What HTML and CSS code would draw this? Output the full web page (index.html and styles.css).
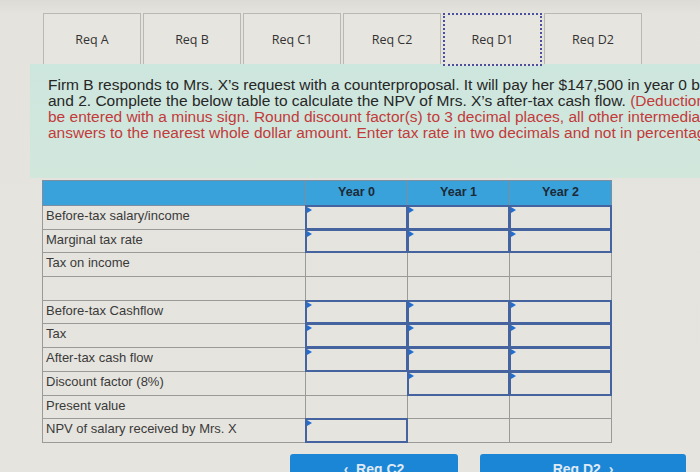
FILE: index.html
```html
<!DOCTYPE html>
<html>
<head>
<meta charset="utf-8">
<link rel="stylesheet" href="styles.css">
</head>
<body>
<div class="page">
  <div class="tabs">
    <div class="tab">Req A</div>
    <div class="tab">Req B</div>
    <div class="tab">Req C1</div>
    <div class="tab">Req C2</div>
    <div class="tab active">Req D1</div>
    <div class="tab">Req D2</div>
  </div>
  <div class="panel">
    <p class="q">Firm B responds to Mrs. X’s request with a counterproposal. It will pay her $147,500 in year 0 b<br>and 2. Complete the below table to calculate the NPV of Mrs. X’s after-tax cash flow. <span class="red">(Deductions</span><br><span class="red">be entered with a minus sign. Round discount factor(s) to 3 decimal places, all other intermediate<br>answers to the nearest whole dollar amount. Enter tax rate in two decimals and not in percentage</span></p>
  </div>
  <table class="grid">
    <thead>
      <tr><th class="lab"></th><th>Year 0</th><th>Year 1</th><th>Year 2</th></tr>
    </thead>
    <tbody>
      <tr><td class="lab">Before-tax salary/income</td><td><div class="in"></div></td><td><div class="in"></div></td><td><div class="in"></div></td></tr>
      <tr><td class="lab">Marginal tax rate</td><td><div class="in"></div></td><td><div class="in"></div></td><td><div class="in"></div></td></tr>
      <tr><td class="lab">Tax on income</td><td></td><td></td><td></td></tr>
      <tr><td class="lab"></td><td></td><td></td><td></td></tr>
      <tr><td class="lab">Before-tax Cashflow</td><td><div class="in"></div></td><td><div class="in"></div></td><td><div class="in"></div></td></tr>
      <tr><td class="lab">Tax</td><td><div class="in"></div></td><td><div class="in"></div></td><td><div class="in"></div></td></tr>
      <tr><td class="lab">After-tax cash flow</td><td><div class="in"></div></td><td><div class="in"></div></td><td><div class="in"></div></td></tr>
      <tr><td class="lab">Discount factor (8%)</td><td></td><td><div class="in"></div></td><td><div class="in"></div></td></tr>
      <tr><td class="lab">Present value</td><td></td><td></td><td></td></tr>
      <tr><td class="lab">NPV of salary received by Mrs. X</td><td><div class="in"></div></td><td></td><td></td></tr>
    </tbody>
  </table>
  <div class="nav">
    <div class="btn prev">‹&nbsp;&nbsp;Req C2</div>
    <div class="btn next">Req D2&nbsp;&nbsp;›</div>
  </div>
</div>
</body>
</html>
```

FILE: styles.css
```css
html, body {
  margin: 0;
  padding: 0;
  overflow: hidden;
  width: 700px;
  height: 472px;
}
body {
  background: linear-gradient(#dcdbd5 0, #e5e3dd 14px, #e6e4de 100%);
  font-family: "Liberation Sans", Arial, sans-serif;
}
.page {
  width: 700px;
  height: 472px;
  overflow: hidden;
}
.tabs {
  display: flex;
  gap: 2px;
  margin: 13px 0 0 43px;
  height: 51px;
}
.tab {
  width: 96px;
  height: 50px;
  border: 1px solid #b9b8b3;
  border-bottom: none;
  background: #e7e5df;
  display: flex;
  align-items: center;
  justify-content: center;
  font-family: "Open Sans", sans-serif;
  font-size: 12.5px;
  color: #333;
}
.tab.active {
  border: 2px dotted #4c4f9c;
  width: 95px;
  height: 49px;
}
.panel {
  margin-left: 30px;
  width: 700px;
  height: 114px;
  background: linear-gradient(#cde6de, #d2e7dc);
  padding: 13px 0 0 18px;
  box-sizing: border-box;
  overflow: hidden;
}
.q {
  margin: 0;
  white-space: nowrap;
  font-family: "Liberation Sans", Arial, sans-serif;
  font-size: 15.5px;
  line-height: 16px;
  color: #262626;
}
.red {
  color: #c23a3a;
}
.grid {
  margin: 2px 0 0 42px;
  border-collapse: collapse;
  table-layout: fixed;
  width: 570px;
}
.grid th {
  height: 25px;
  background: #3aa2da;
  border: 1px solid #7c8ea0;
  font-size: 12.5px;
  font-weight: bold;
  color: #1c2a38;
  padding: 4px 0 0;
  vertical-align: top;
  box-sizing: border-box;
}
.grid th.lab {
  width: 263px;
}
.grid tbody tr {
  height: 23.7px;
}
.grid td {
  border: 1px solid #9a9a98;
  padding: 0;
  position: relative;
  font-size: 13px;
  line-height: 16px;
  color: #3a3a3a;
  vertical-align: top;
}
.grid td.lab {
  padding: 2px 0 0 3px;
}
.in {
  position: absolute;
  left: -1px;
  top: -1px;
  right: -1px;
  bottom: -1px;
  border: 2px solid #44639f;
}
.in::before {
  content: "";
  position: absolute;
  left: 0;
  top: 0;
  border-left: 5px solid #1f6fd2;
  border-top: 3px solid transparent;
  border-bottom: 3px solid transparent;
}
.nav {
  display: flex;
  gap: 22px;
  margin: 11px 0 0 290px;
}
.btn {
  height: 30px;
  background: #1c86d6;
  border-radius: 3px;
  color: #dfe9f3;
  font-size: 14px;
  font-weight: bold;
  display: flex;
  justify-content: center;
  padding-top: 7px;
  box-sizing: border-box;
}
.prev {
  width: 168px;
}
.next {
  width: 206px;
}
```
